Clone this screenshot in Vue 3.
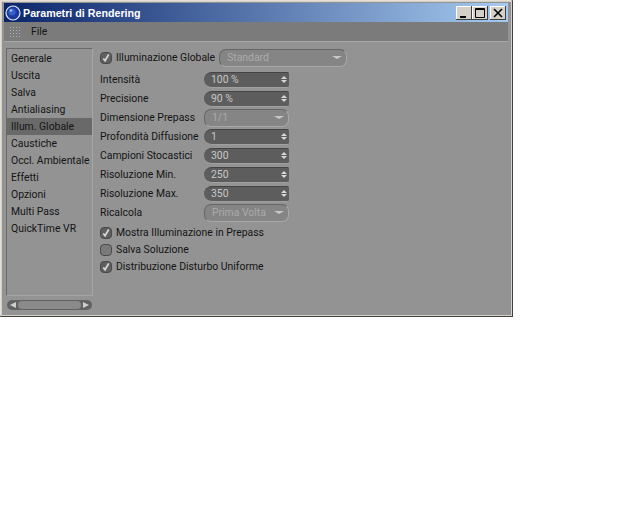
<script setup>
const tabs = ['Generale', 'Uscita', 'Salva', 'Antialiasing', 'Illum. Globale', 'Caustiche', 'Occl. Ambientale', 'Effetti', 'Opzioni', 'Multi Pass', 'QuickTime VR']

const rows = [
  { label: 'Intensità', value: '100 %', type: 'spin' },
  { label: 'Precisione', value: '90 %', type: 'spin' },
  { label: 'Dimensione Prepass', value: '1/1', type: 'drop' },
  { label: 'Profondità Diffusione', value: '1', type: 'spin' },
  { label: 'Campioni Stocastici', value: '300', type: 'spin' },
  { label: 'Risoluzione Min.', value: '250', type: 'spin' },
  { label: 'Risoluzione Max.', value: '350', type: 'spin' },
  { label: 'Ricalcola', value: 'Prima Volta', type: 'drop' },
]

const checks = [
  { label: 'Mostra Illuminazione in Prepass', on: true },
  { label: 'Salva Soluzione', on: false },
  { label: 'Distribuzione Disturbo Uniforme', on: true },
]
</script>

<template>
  <div class="window">
    <div class="titlebar">
      <svg class="logo" width="16" height="16" viewBox="0 0 16 16">
        <circle cx="8" cy="8" r="7" fill="#1c3a9a" stroke="#dfe6f5" stroke-width="1.2" />
        <circle cx="7" cy="7" r="3.6" fill="#3560cc" />
        <circle cx="6" cy="5.500" r="1.300" fill="#a9bdf0" />
      </svg>
      <span class="title">Parametri di Rendering</span>
      <div class="winbtns">
        <div class="winbtn">
          <svg width="16" height="14" viewBox="0 0 16 14"><rect x="4" y="10" width="6" height="2" fill="#000" /></svg>
        </div>
        <div class="winbtn">
          <svg width="16" height="14" viewBox="0 0 16 14"><path d="M3.500 2.500h9v9h-9z M3 3.500h10" fill="none" stroke="#000" /></svg>
        </div>
        <div class="winbtn close">
          <svg width="16" height="14" viewBox="0 0 16 14"><path d="M4 3l8 8M12 3l-8 8" fill="none" stroke="#000" stroke-width="1.600" /></svg>
        </div>
      </div>
    </div>

    <div class="menubar">
      <div class="grip"></div>
      <span>File</span>
    </div>

    <div class="body">
      <div class="side">
        <div class="tabs">
          <div v-for="t in tabs" :key="t" class="tab" :class="{ active: t === 'Illum. Globale' }">{{ t }}</div>
        </div>
        <div class="scroll">
          <span class="arrow left"></span>
          <span class="thumb"></span>
          <span class="arrow right"></span>
        </div>
      </div>

      <div class="main">
        <div class="head">
          <span class="check">
            <svg width="10" height="10" viewBox="0 0 11 11"><path d="M2.500 6l2 2.500L8.500 1.500" fill="none" stroke="#d8d8d8" stroke-width="2" /></svg>
          </span>
          <span class="head-label">Illuminazione Globale</span>
          <div class="drop wide">
            <span>Standard</span>
            <i class="tri"></i>
          </div>
        </div>

        <div class="rows">
          <div v-for="r in rows" :key="r.label" class="row">
            <span class="label">{{ r.label }}</span>
            <div v-if="r.type === 'spin'" class="spin">
              <span>{{ r.value }}</span>
              <span class="updown"><i class="up"></i><i class="down"></i></span>
            </div>
            <div v-else class="drop">
              <span>{{ r.value }}</span>
              <i class="tri"></i>
            </div>
          </div>
        </div>

        <div class="checks">
          <div v-for="c in checks" :key="c.label" class="check-row">
            <span class="check" :class="{ off: !c.on }">
              <svg v-if="c.on" width="10" height="10" viewBox="0 0 11 11"><path d="M2.500 6l2 2.500L8.500 1.500" fill="none" stroke="#d8d8d8" stroke-width="2" /></svg>
            </span>
            <span>{{ c.label }}</span>
          </div>
        </div>
      </div>
    </div>
  </div>
</template>

<style scoped>
.window {
  width: 513px;
  height: 317px;
  box-sizing: border-box;
  display: flex;
  flex-direction: column;
  background: #939393;
  border: 1px solid #404040;
  border-left-color: #e4e0d8;
  border-top-color: #e4e0d8;
  border-right-width: 2px;
  border-bottom-width: 2px;
  padding: 2px 3px 0 3px;
  font-family: Roboto, "Liberation Sans", sans-serif;
  font-size: 10.4px;
  color: #141414;
  outline: 1px solid #d4d0c8;
  outline-offset: -2px;
}
.titlebar {
  height: 19px;
  flex: none;
  display: flex;
  align-items: center;
  padding: 0 2px 0 1px;
  background: linear-gradient(to right, #0a246a, #a6caf0);
}
.logo {
  flex: none;
}
.title {
  margin-left: 2px;
  color: #fff;
  font-family: "Liberation Sans", sans-serif;
  font-weight: bold;
  font-size: 10.700px;
}
.winbtns {
  margin-left: auto;
  display: flex;
}
.winbtn {
  width: 16px;
  height: 14px;
  background: #d4d0c8;
  box-shadow: inset -1px -1px #404040, inset 1px 1px #fff;
}
.winbtn svg {
  display: block;
}
.close {
  margin-left: 2px;
}
.menubar {
  height: 20px;
  flex: none;
  display: flex;
  align-items: center;
  gap: 10px;
  padding-left: 5px;
  background: #7b7b7b;
  border-bottom: 1px solid #a8a8a8;
  box-sizing: border-box;
}
.grip {
  width: 12px;
  height: 12px;
  background-image: radial-gradient(#b0b0b0 40%, transparent 45%);
  background-size: 3px 3px;
}
.body {
  flex: 1;
  display: flex;
  min-height: 0;
}
.side {
  width: 87px;
  flex: none;
  margin: 6px 0 0 2px;
  display: flex;
  flex-direction: column;
}
.tabs {
  height: 248px;
  box-sizing: border-box;
  border: 1px solid #a6a6a6;
  border-top-color: #6a6a6a;
  border-left-color: #6a6a6a;
  padding-top: 1px;
}
.tab {
  height: 17px;
  line-height: 17px;
  padding-left: 4px;
  white-space: nowrap;
}
.active {
  background: #696969;
}
.scroll {
  margin: 4px 1px 0;
  height: 10px;
  display: flex;
  align-items: center;
  gap: 2px;
  padding: 0 3px;
  background: #626262;
  border-radius: 5px;
}
.thumb {
  flex: 1;
  height: 8px;
  background: #8a8a8a;
  border-radius: 4px;
}
.arrow {
  width: 0;
  height: 0;
  border-top: 3px solid transparent;
  border-bottom: 3px solid transparent;
}
.left {
  border-right: 6px solid #cfcfcf;
}
.right {
  border-left: 6px solid #cfcfcf;
}
.main {
  flex: 1;
  padding: 6px 0 0 7px;
}
.head {
  display: flex;
  align-items: center;
  height: 19px;
}
.check {
  width: 12px;
  height: 12px;
  box-sizing: border-box;
  flex: none;
  border-radius: 4px;
  background: #5f5f5f;
  border: 1px solid #4a4a4a;
}
.check.off {
  background: #7a7a7a;
}
.check svg {
  display: block;
}
.head-label {
  margin-left: 4px;
  white-space: nowrap;
}
.head .drop {
  margin-left: 4px;
}
.rows {
  margin-top: 3px;
  display: flex;
  flex-direction: column;
}
.row {
  height: 19px;
  display: flex;
  align-items: center;
}
.label {
  width: 104px;
  flex: none;
  white-space: nowrap;
}
.spin, .drop {
  width: 85px;
  box-sizing: border-box;
  display: flex;
  align-items: center;
  padding-left: 7px;
}
.spin {
  height: 16px;
  border-radius: 8px 2px 2px 8px;
  background: #5d5d5d;
  color: #c8c8c8;
  border-top: 1px solid #444;
  border-bottom: 1px solid #a0a0a0;
}
.drop {
  height: 18px;
  background: #858585;
  color: #ababab;
  border: 1px solid #666;
  border-bottom-color: #a8a8a8;
  border-right-color: #a8a8a8;
  border-radius: 7px;
}
.wide {
  width: 128px;
}
.updown {
  margin-left: auto;
  margin-right: 2px;
  display: flex;
  flex-direction: column;
  gap: 1px;
}
.up, .down {
  width: 0;
  height: 0;
  border-left: 3px solid transparent;
  border-right: 3px solid transparent;
}
.up {
  border-bottom: 3px solid #d8d8d8;
}
.down {
  border-top: 3px solid #d8d8d8;
}
.tri {
  margin-left: auto;
  margin-right: 4px;
  width: 0;
  height: 0;
  border-left: 5px solid transparent;
  border-right: 5px solid transparent;
  border-top: 3px solid #c8c8c8;
}
.checks {
  margin-top: 2px;
  display: flex;
  flex-direction: column;
}
.check-row {
  height: 17px;
  display: flex;
  align-items: center;
  gap: 4px;
  white-space: nowrap;
}
</style>

<style>
html, body {
  background: #fff;
}
</style>
